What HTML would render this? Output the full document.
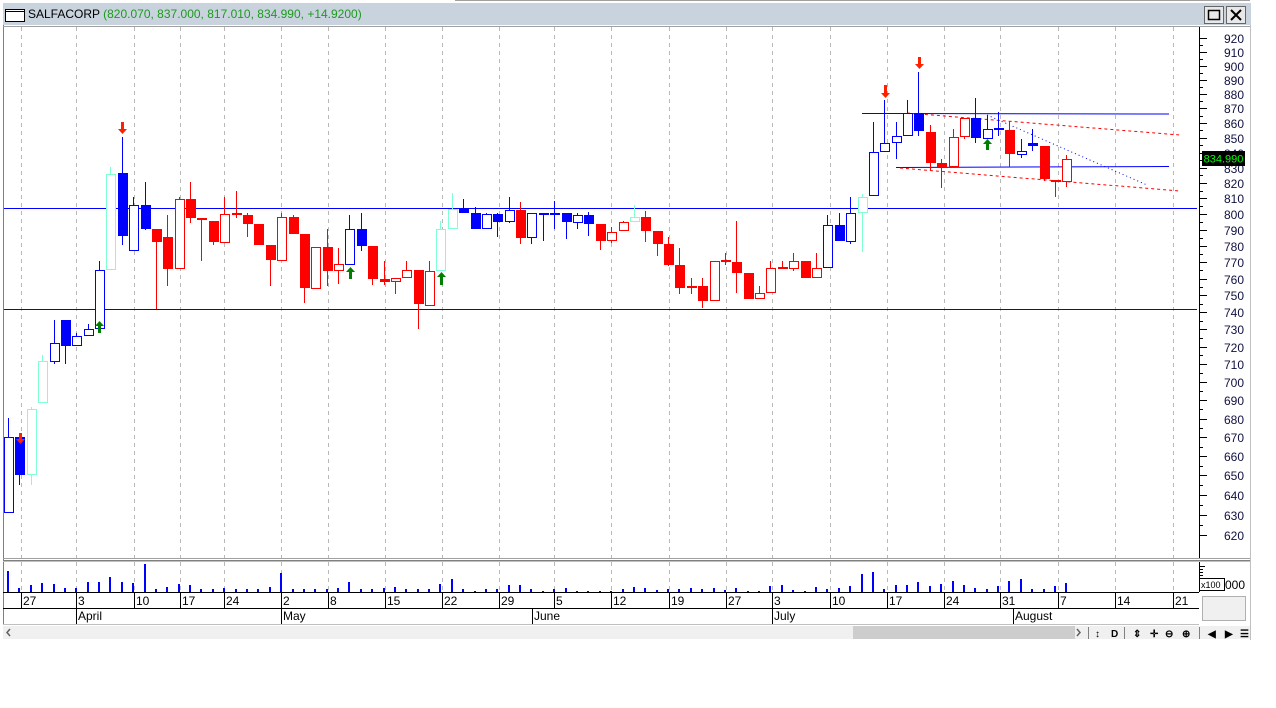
<!DOCTYPE html>
<html><head><meta charset="utf-8"><style>
html,body{margin:0;padding:0;background:#fff;width:1276px;height:708px;overflow:hidden}
svg{display:block;font-family:"Liberation Sans",Arial,sans-serif}
</style></head><body>
<svg id="s" width="1276" height="708" xmlns="http://www.w3.org/2000/svg">
<rect x="0" y="0" width="1276" height="708" fill="#fff"/>
<line x1="455" y1="0.5" x2="1250" y2="0.5" stroke="#a0a0a0"/>
<rect x="3" y="3" width="1248" height="22" fill="#c8d3de"/>
<rect x="5.5" y="9.5" width="19" height="12" fill="#fff" stroke="#000"/>
<line x1="5" y1="11.5" x2="25" y2="11.5" stroke="#000"/>
<text x="28" y="18" font-size="12" fill="#000">SALFACORP <tspan fill="#1e9a1e">(820.070, 837.000, 817.010, 834.990, +14.9200)</tspan></text>
<rect x="1204.5" y="6.5" width="19" height="17" fill="#e8e8e8" stroke="#666"/>
<rect x="1208.5" y="10.5" width="11" height="9" fill="none" stroke="#000" stroke-width="1.5"/>
<rect x="1226.5" y="6.5" width="19" height="17" fill="#e8e8e8" stroke="#666"/>
<path d="M1231 10 L1241 20 M1241 10 L1231 20" stroke="#000" stroke-width="2"/>
<line x1="3.5" y1="25" x2="3.5" y2="624" stroke="#808080"/>
<line x1="1250.5" y1="25" x2="1250.5" y2="640" stroke="#c0c0c0"/>
<line x1="3" y1="26.5" x2="1250" y2="26.5" stroke="#a0a0a0"/>
<g id="grid"></g>
<line x1="1199.5" y1="27" x2="1199.5" y2="559" stroke="#000"/>
<g id="axis"></g>
<line x1="4" y1="208.5" x2="1197" y2="208.5" stroke="#0000ff"/>
<line x1="4" y1="309.5" x2="1197" y2="309.5" stroke="#0000ff"/>
<line x1="862" y1="113.5" x2="1169" y2="114" stroke="#0000ff"/>
<line x1="896" y1="167.5" x2="1169" y2="166.5" stroke="#0000ff"/>
<line x1="907" y1="113" x2="1180" y2="135" stroke="#ff0000" stroke-dasharray="3,3"/>
<line x1="900" y1="168" x2="1180" y2="191" stroke="#ff0000" stroke-dasharray="3,3"/>
<line x1="987" y1="115" x2="1147" y2="185" stroke="#0000ff" stroke-dasharray="1,3"/>
<g id="candles"></g>
<g id="arrows"></g>
<rect x="1202" y="151" width="43" height="15" fill="#000"/>
<text x="1223.5" y="162.5" font-size="11" fill="#00ff00" text-anchor="middle">834.990</text>
<line x1="3" y1="558.5" x2="1250" y2="558.5" stroke="#a0a0a0"/>
<line x1="3" y1="560.5" x2="1250" y2="560.5" stroke="#808080"/>
<line x1="3" y1="561.5" x2="1250" y2="561.5" stroke="#c0c0c0"/>
<g id="vol"></g>
<line x1="1199.5" y1="562" x2="1199.5" y2="592" stroke="#000"/>
<g stroke="#000"><line x1="1199" y1="566.5" x2="1205" y2="566.5"/><line x1="1199" y1="569.5" x2="1203" y2="569.5"/><line x1="1199" y1="572.5" x2="1203" y2="572.5"/><line x1="1199" y1="575.5" x2="1203" y2="575.5"/><line x1="1199" y1="578.5" x2="1205" y2="578.5"/></g>
<rect x="1199.5" y="578.5" width="25" height="12" fill="#fff" stroke="#000"/>
<text x="1201" y="588" font-size="9" fill="#000">x100</text>
<text x="1225" y="589" font-size="12" fill="#000">000</text>
<line x1="3" y1="592.5" x2="1199" y2="592.5" stroke="#000"/>
<line x1="3" y1="608.5" x2="1199" y2="608.5" stroke="#000"/>
<line x1="3" y1="624.5" x2="1199" y2="624.5" stroke="#c0c0c0"/>
<rect x="1202.5" y="596.5" width="43" height="24" fill="#f0f0f0" stroke="#b0b0b0"/>
<g id="dates" font-size="12" fill="#000"></g>
<rect x="3" y="626" width="1247" height="13" fill="#f0f0f0"/>
<rect x="853" y="626" width="222" height="13" fill="#cdcdcd"/>
<path d="M10 629 L7 632.5 L10 636" stroke="#606060" stroke-width="1.5" fill="none"/>
<path d="M1077 629 L1080 632.5 L1077 636" stroke="#606060" stroke-width="1.5" fill="none"/>
<g font-size="10" fill="#000" font-weight="bold">
<line x1="1088.5" y1="627" x2="1088.5" y2="639" stroke="#808080"/>
<text x="1095" y="637">↕</text><text x="1111" y="637">D</text>
<line x1="1124.5" y1="627" x2="1124.5" y2="639" stroke="#808080"/>
<text x="1133" y="637">⇕</text><text x="1150" y="637">✛</text><text x="1165" y="637">⊖</text><text x="1182" y="637">⊕</text>
<line x1="1199.5" y1="627" x2="1199.5" y2="639" stroke="#808080"/>
<text x="1208" y="637">◀</text><text x="1225" y="637">▶</text><text x="1240" y="637">☰</text>
</g>
</svg>
<script>
var NS="http://www.w3.org/2000/svg";
function el(p,t,a,txt){var e=document.createElementNS(NS,t);for(var k in a)e.setAttribute(k,a[k]);if(txt!==undefined)e.textContent=txt;document.getElementById(p).appendChild(e);return e;}
var ticks=[21,76,134,180,224,281,328,385,442,499,554,611,669,726,772,830,887,944,1000,1058,1115,1173];
var labels=["27","3","10","17","24","2","8","15","22","29","5","12","19","27","3","10","17","24","31","7","14","21"];
ticks.forEach(function(x,i){
 el("grid","line",{x1:x+.5,y1:27,x2:x+.5,y2:558,stroke:"#b8b8b8","stroke-dasharray":"4,4"});
 el("grid","line",{x1:x+.5,y1:562,x2:x+.5,y2:592,stroke:"#b8b8b8","stroke-dasharray":"4,4"});
 el("dates","line",{x1:x+.5,y1:592,x2:x+.5,y2:608,stroke:"#000"});
 el("dates","text",{x:x+2,y:605},labels[i]);
});
[[76,"April"],[281,"May"],[532,"June"],[772,"July"],[1013,"August"]].forEach(function(m){
 el("dates","line",{x1:m[0]+.5,y1:608,x2:m[0]+.5,y2:624,stroke:"#000"});
 el("dates","text",{x:m[0]+2,y:620},m[1]);
});
function py(p){return 38+(Math.log(920)-Math.log(p))*1259.2;}
for(var p=920;p>=620;p-=10){var y=Math.round(py(p))+.5;
 el("axis","line",{x1:1199,y1:y,x2:1207,y2:y,stroke:"#000"});
 el("axis","text",{x:1244,y:y+4.5,"font-size":"12",fill:"#101040","text-anchor":"end"},String(p));
 var y2=Math.round(py(p-5))+.5; if(p>620) el("axis","line",{x1:1199,y1:y2,x2:1203,y2:y2,stroke:"#000"});
}
var C=[
['b',418,513,437,513],['B',437,485,437,475],['c',407,485,409,475],['c',355,403,361,403],['b',320,364,343,362],
['B',320,364,320,346],['b',333,346,336,346],['b',324,336,329,336],['b',261,330,270,329],['c',167,270,174,270],
['B',137,245,173,236],['b',197,251,205,251],['B',182,230,205,229],['R',229,309,229,242],['R',215,286,237,269],
['r',197,269,199,269],['R',182,223,199,218],['R',218,261,218,220],['R',221,245,221,242],['r',197,243,214,243],
['R',191,218,213,215],['R',213,237,215,224],['R',224,245,224,245],['R',245,286,245,260],['r',213,261,217,261],
['R',215,234,217,234],['R',234,303,234,288],['r',247,289,247,289],['R',229,286,247,271],['r',248,284,264,271],
['b',215,265,229,265],['B',213,251,229,246],['R',246,285,246,279],['R',261,285,279,282],['r',278,294,278,282],
['r',261,278,270,278],['R',270,329,270,304],['r',261,306,271,306],['c',221,271,229,271],['c',193,229,209,229],
['B',199,213,209,213],['B',207,229,213,229],['b',213,229,214,229],['B',213,237,214,222],['b',197,223,210,222],
['R',202,244,210,238],['b',213,244,213,238],['b',213,241,213,214],['B',201,229,213,215],['B',213,239,213,222],
['b',213,229,215,223],['B',212,236,215,224],['R',224,250,224,241],['r',227,243,232,241],['r',221,231,222,231],
['c',205,222,217,222],['R',211,242,217,231],['R',231,256,231,244],['R',237,266,244,265],['R',248,294,265,288],
['r',278,294,286,288],['R',278,308,286,301],['r',261,301,261,301],['R',253,265,260,262],['R',221,293,262,273],
['R',273,299,273,299],['r',286,299,293,299],['r',261,293,268,293],['R',261,268,267,269],['r',253,271,261,269],
['R',261,278,261,278],['r',253,278,268,278],['b',215,268,225,268],['B',213,241,225,241],['b',197,244,213,242],
['c',194,252,197,213],['b',122,196,152,196],['b',100,152,143,152],['b',122,159,136,143],['b',100,136,113,136],
['B',72,136,113,131],['R',125,170,132,163],['R',159,188,163,167],['r',129,167,137,167],['r',118,139,118,137],
['B',98,143,118,138],['b',115,139,129,139],['B',112,136,128,130],['R',121,167,130,154],['b',139,158,151,155],
['B',129,151,143,146],['R',146,181,146,179],['R',181,197,180,182],['r',155,187,159,182]];
var COL={b:'#0000ff',B:'#0000ff',r:'#ff0000',R:'#ff0000',c:'#80ffd0'};
C.forEach(function(c,i){
 var x=Math.round(8+11.38*i), col=COL[c[0]], fill=(c[0]=='B'||c[0]=='R');
 el("candles","line",{x1:x+.5,y1:c[1],x2:x+.5,y2:c[2],stroke:col});
 var h=Math.max(c[4]-c[3],2);
 if(fill) el("candles","rect",{x:x-4,y:c[3],width:10,height:h,fill:col});
 else el("candles","rect",{x:x-3.5,y:c[3]+.5,width:9,height:Math.max(h-1,1),fill:"#fff",stroke:col});
});
var V=[21,4,7,9,8,4,4,10,10,15,10,9,28,3,5,8,7,3,3,4,3,3,3,5,19,3,3,3,3,4,10,3,3,4,5,3,3,3,8,13,3,1,3,3,7,7,3,1,3,4,1,1,1,1,3,5,
4,2,3,3,4,3,4,2,4,1,1,6,7,2,1,5,3,4,6,18,20,3,7,7,10,6,8,11,7,4,3,6,11,13,3,3,6,9];
V.forEach(function(h,i){var x=Math.round(8+11.38*i);el("vol","rect",{x:x-1,y:592-h,width:2,height:h,fill:"#0000ff"});});
function arrow(x,y1,y2,down,col){
 var d= down? "M"+(x-1)+","+y1+" h3 v"+(y2-y1-4)+" h3 l-4.5,5 l-4.5,-5 h3 z"
            : "M"+(x-1)+","+y2+" h3 v"+(-(y2-y1-4))+" h3 l-4.5,-5 l-4.5,5 h3 z";
 el("arrows","path",{d:d,fill:col});
}
arrow(20,433,443,true,"#ff2000");arrow(122,122,133,true,"#ff2000");arrow(885,85,97,true,"#ff2000");arrow(919,57,68,true,"#ff2000");
arrow(99,322,333,false,"#008000");arrow(350,268,279,false,"#008000");arrow(441,273,285,false,"#008000");arrow(987,140,150,false,"#008000");
</script>
</body></html>
